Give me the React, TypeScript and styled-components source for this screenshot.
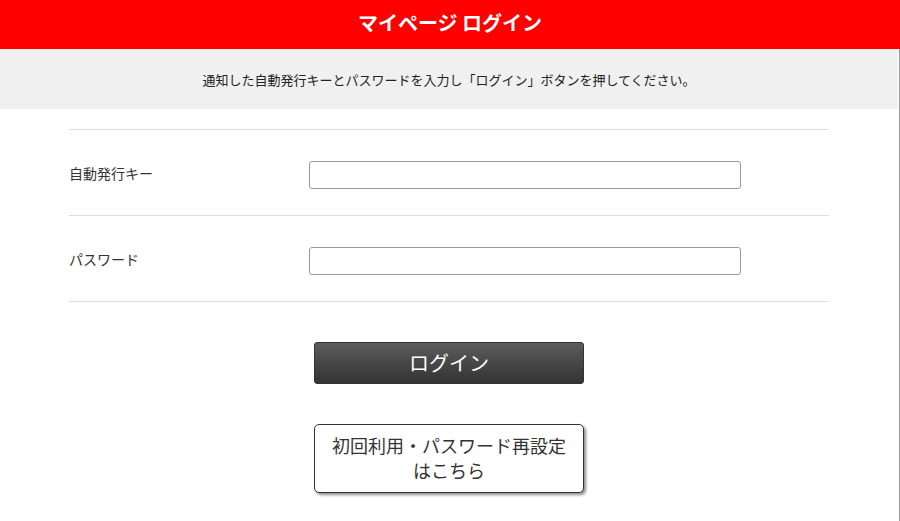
import React from "react";
import styled, { createGlobalStyle } from "styled-components";

const GlobalStyle = createGlobalStyle`
  html, body { margin: 0; padding: 0; background: #fff; }
  body {
    font-family: "Noto Sans CJK JP", "Noto Sans", "Liberation Sans", sans-serif;
    color: #333;
  }
  * { box-sizing: border-box; }
`;

const Header = styled.header`
  height: 49px;
  background: #ff0000;
  color: #fff;
  display: flex;
  align-items: center;
  justify-content: center;
  padding-bottom: 4px;
`;

const Title = styled.h1`
  margin: 0;
  font-size: 20px;
  font-weight: 700;
  line-height: 1;
`;

const Main = styled.main`
  width: 900px;
  min-height: calc(100vh - 49px);
  border-right: 1px solid #999;
  padding: 0 1px 20px 0;
`;

const Notice = styled.div`
  height: 60px;
  background: #f0f0f0;
  display: flex;
  align-items: center;
  justify-content: center;
  font-size: 13px;
  color: #222;
`;

const Form = styled.form`
  width: 760px;
  margin: 20px auto 0;
  border-top: 1px solid #ddd;
`;

const Row = styled.div`
  display: flex;
  align-items: flex-start;
  padding: 31px 0 26px;
  border-bottom: 1px solid #ddd;
`;

const Label = styled.label`
  width: 240px;
  flex: none;
  font-size: 14px;
  line-height: 20px;
  margin-top: 2px;
  color: #333;
`;

const Input = styled.input`
  width: 432px;
  height: 28px;
  border: 1px solid #999;
  border-radius: 3px;
  padding: 0 6px;
  font-size: 14px;
  background: #fff;
  outline: none;
`;

const Actions = styled.div`
  display: flex;
  flex-direction: column;
  align-items: center;
  gap: 40px;
  margin-top: 40px;
`;

const LoginButton = styled.button`
  width: 270px;
  height: 42px;
  border: 1px solid #333;
  border-radius: 3px;
  background: linear-gradient(to bottom, #5c5c5c 0%, #333 100%);
  color: #fff;
  font-family: inherit;
  font-size: 20px;
  line-height: 1;
  cursor: pointer;
`;

const LinkButton = styled.a`
  display: block;
  width: 270px;
  border: 1px solid #333;
  border-radius: 5px;
  background: #fff;
  box-shadow: 2px 2px 3px rgba(0, 0, 0, 0.45);
  color: #333;
  font-size: 18px;
  line-height: 25px;
  text-align: center;
  text-decoration: none;
  padding: 8px 0 9px;
  cursor: pointer;
`;

export default function App() {
  return (
    <>
      <GlobalStyle />
      <Header>
        <Title>マイページ ログイン</Title>
      </Header>
      <Main>
        <Notice>
          通知した自動発行キーとパスワードを入力し「ログイン」ボタンを押してください。
        </Notice>
        <Form onSubmit={(e) => e.preventDefault()}>
          <Row>
            <Label htmlFor="key">自動発行キー</Label>
            <Input id="key" type="text" />
          </Row>
          <Row>
            <Label htmlFor="pw">パスワード</Label>
            <Input id="pw" type="password" />
          </Row>
        </Form>
        <Actions>
          <LoginButton type="button">ログイン</LoginButton>
          <LinkButton href="#">
            初回利用・パスワード再設定
            <br />
            はこちら
          </LinkButton>
        </Actions>
      </Main>
    </>
  );
}
